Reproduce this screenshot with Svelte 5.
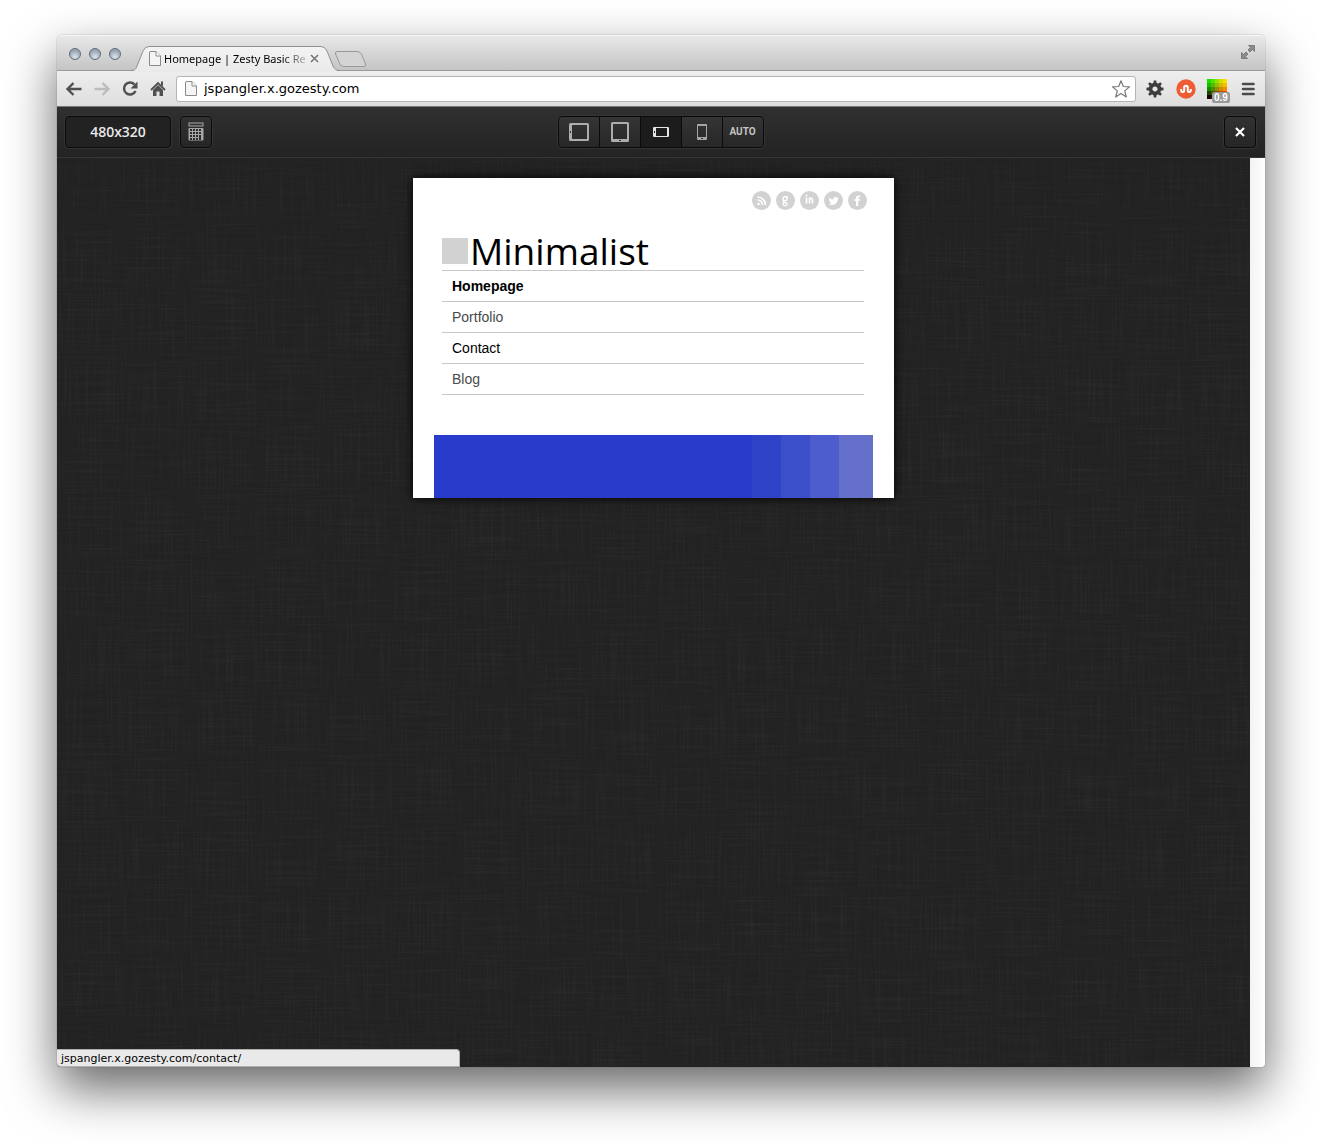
<script>
  let url = $state('jspangler.x.gozesty.com');
  let device = $state('phone-landscape');

  const pages = [
    { label: 'Homepage', href: '/', kind: 'current' },
    { label: 'Portfolio', href: '/portfolio/', kind: '' },
    { label: 'Contact', href: '/contact/', kind: 'hovered' },
    { label: 'Blog', href: '/blog/', kind: '' }
  ];

  const devices = [
    { id: 'tablet-landscape', label: 'Tablet landscape' },
    { id: 'tablet-portrait', label: 'Tablet portrait' },
    { id: 'phone-landscape', label: 'Phone landscape' },
    { id: 'phone-portrait', label: 'Phone portrait' },
    { id: 'auto', label: 'Auto' }
  ];

  const socials = ['RSS', 'Google', 'LinkedIn', 'Twitter', 'Facebook'];

  const swatches = [];
  for (let r = 0; r < 5; r++) {
    for (let c = 0; c < 5; c++) {
      const red = [20, 80, 150, 205, 245][c] * [1, 1, 1, 0.95, 0.85][r];
      const green = [225, 190, 140, 75, 5][r];
      swatches.push({ x: c * 4, y: r * 4, fill: `rgb(${Math.round(red)},${green},0)` });
    }
  }
</script>

{#snippet pageIcon()}
  <svg class="page-icon" width="12" height="15" viewBox="0 0 12 15" aria-hidden="true">
    <path d="M1 .5h6L11.500 5v9.500H.5V1z" fill="#f4f4f4" stroke="#8a8a8a" />
    <path d="M7 .5V5h4.500" fill="#fff" stroke="#8a8a8a" />
  </svg>
{/snippet}

<div class="desktop">
  <div class="window">
    <header class="titlebar">
      <div class="lights">
        <button aria-label="Close window"></button>
        <button aria-label="Minimize window"></button>
        <button aria-label="Zoom window"></button>
      </div>
      <div class="tab">
        <svg class="tab-shape" width="210" height="26" viewBox="0 0 210 26" aria-hidden="true">
          <defs>
            <linearGradient id="tabfill" x1="0" y1="0" x2="0" y2="1">
              <stop offset="0" stop-color="#f3f3f3" />
              <stop offset="1" stop-color="#eaeaea" />
            </linearGradient>
          </defs>
          <path d="M0 25.500C4 25 5 23 6 20L12 5Q14 .5 18 .5H190Q194 .5 196 5L202 20C204 24 206 25 209 25.500V26H0z" fill="url(#tabfill)" />
          <path d="M0 24.500C4 24 5 23 6 20L12 5Q14 .5 18 .5H190Q194 .5 196 5L202 20C204 24 206 24.500 210 24.500" fill="none" stroke="#8f8f8f" />
        </svg>
        {@render pageIcon()}
        <span class="tab-title">Homepage | Zesty Basic Re</span>
        <button class="tab-close" aria-label="Close tab">
          <svg width="9" height="9" viewBox="0 0 9 9"><path d="M1 1l7 7M8 1L1 8" stroke="#777" stroke-width="1.600" /></svg>
        </button>
      </div>
      <button class="new-tab" aria-label="New tab">
        <svg width="34" height="18" viewBox="0 0 34 18">
          <path d="M3 1.500H23Q26 1.500 27.500 4L31.500 14Q32 16.500 30 16.500H10Q7 16.500 6 14L1.500 4Q1 1.500 3 1.500z" fill="#d4d4d4" stroke="#999" />
        </svg>
      </button>
      <button class="fullscreen" aria-label="Full screen">
        <svg width="16" height="16" viewBox="0 0 16 16" fill="#8b8b8b" stroke="#666" stroke-width=".7">
          <path d="M8.500 1.500h6v6l-2-2-2.500 2.500-2-2L10.500 3.500z" />
          <path d="M7.500 14.500h-6v-6l2 2L6 8l2 2-2.500 2.500z" />
        </svg>
      </button>
    </header>

    <div class="navbar">
      <button class="tool" aria-label="Back">
        <svg width="18" height="18" viewBox="0 0 18 18" fill="none" stroke="#505050" stroke-width="2.400"><path d="M2.500 9H16.500M8.500 3L2.500 9l6 6" /></svg>
      </button>
      <button class="tool" aria-label="Forward">
        <svg width="18" height="18" viewBox="0 0 18 18" fill="none" stroke="#bcbcbc" stroke-width="2.400"><path d="M15.500 9H1.500M9.500 3l6 6-6 6" /></svg>
      </button>
      <button class="tool" aria-label="Reload">
        <svg width="18" height="18" viewBox="0 0 18 18"><path d="M13.500 4.500A6 6 0 1 0 14.500 11" fill="none" stroke="#505050" stroke-width="2.500" /><path d="M16.500 1.500V8.500H9.500z" fill="#505050" /></svg>
      </button>
      <button class="tool" aria-label="Home">
        <svg width="18" height="18" viewBox="0 0 18 18"><path d="M9 5l5 5v6h-3.500v-4.500h-3V16H4v-6z" fill="#505050" /><path d="M2 10L9 3l7 7" fill="none" stroke="#505050" stroke-width="1.800" /><path d="M12 1.500h2v5l-2-2z" fill="#505050" /></svg>
      </button>
      <div class="omnibox">
        {@render pageIcon()}
        <input type="text" aria-label="Address" spellcheck="false" bind:value={url} />
        <button class="star" aria-label="Bookmark">
          <svg width="20" height="20" viewBox="0 0 20 20"><path d="M10 1.800l2.300 5.700 6.200.4-4.800 4 1.600 6.100L10 14.600 4.700 18l1.600-6.100-4.800-4 6.200-.4z" fill="#fff" stroke="#777" stroke-width="1.200" stroke-linejoin="round" /></svg>
        </button>
      </div>
      <button class="extension" aria-label="Settings">
        <svg width="18" height="18" viewBox="-9 -9 18 18">
          <circle r="4.400" fill="none" stroke="#3d3d3d" stroke-width="3.600" />
          <g fill="#3d3d3d">
            {#each [0, 45, 90, 135, 180, 225, 270, 315] as a}
              <path d="M-1.700-5.500L-1.200-8.500H1.200L1.700-5.500z" transform="rotate({a})" />
            {/each}
          </g>
        </svg>
      </button>
      <button class="extension" aria-label="StumbleUpon">
        <svg width="20" height="20" viewBox="0 0 20 20">
          <circle cx="10" cy="10" r="9.700" fill="#ee5c34" />
          <path d="M5.200 10v1.500a1.500 1.500 0 0 0 3 0V8.500a1.800 1.800 0 0 1 3.600 0v3a1.500 1.500 0 0 0 3 0V10" fill="none" stroke="#fff" stroke-width="2" />
        </svg>
      </button>
      <button class="extension" aria-label="Page score">
        <svg width="20" height="20" viewBox="0 0 20 20">
          {#each swatches as s}<rect x={s.x} y={s.y} width="4" height="4" fill={s.fill} />{/each}
        </svg>
        <span class="badge">0.9</span>
      </button>
      <button class="extension" aria-label="Menu">
        <svg width="14" height="14" viewBox="0 0 14 14" stroke="#4b4b4b" stroke-width="2.600" stroke-linecap="round"><path d="M2 2h10.500M2 7h10.500M2 12h10.500" /></svg>
      </button>
    </div>

    <div class="previewbar">
      <div class="left">
        <button class="dark size">480x320</button>
        <button class="dark square" aria-label="Calculator">
          <svg width="16" height="19" viewBox="0 0 16 19">
            <rect x="1" y="1" width="14" height="3" fill="#333" stroke="#a8a8a8" />
            <rect x=".5" y="6" width="15" height="12.500" rx="1" fill="#a8a8a8" />
            <g fill="#2c2c2c">
              {#each [7, 10, 13, 16] as y}
                {#each [2, 5, 8, 11] as x}<rect {x} {y} width="2" height="2" />{/each}
              {/each}
              <rect x="11" y="13" width="2" height="5" />
            </g>
          </svg>
        </button>
      </div>
      <div class="devices" role="group" aria-label="Device">
        {#each devices as d}
          <button class:active={device === d.id} aria-pressed={device === d.id} aria-label={d.label} onclick={() => (device = d.id)}>
            {#if d.id === 'tablet-landscape'}
              <svg width="20" height="18" viewBox="0 0 20 18"><path fill="#adadad" fill-rule="evenodd" d="M1.500 0h17Q20 0 20 1.500v15q0 1.500-1.500 1.500h-17Q0 18 0 16.500v-15Q0 0 1.500 0zM3 2v14h15V2z" /><path d="M1 8h1v2H1z" fill="#333" /></svg>
            {:else if d.id === 'tablet-portrait'}
              <svg width="18" height="20" viewBox="0 0 18 20"><path fill="#adadad" fill-rule="evenodd" d="M1.500 0h15Q18 0 18 1.500v17q0 1.500-1.500 1.500h-15Q0 20 0 18.500v-17Q0 0 1.500 0zM2 2v15h14V2z" /><path d="M8 18h2v1H8z" fill="#333" /></svg>
            {:else if d.id === 'phone-landscape'}
              <svg width="16" height="10" viewBox="0 0 16 10"><path fill="#e4e4e4" fill-rule="evenodd" d="M1 0h14q1 0 1 1v8q0 1-1 1H1q-1 0-1-1V1q0-1 1-1zM3 1v8h11V1z" /><path d="M1 4h1v2H1z" fill="#222" /></svg>
            {:else if d.id === 'phone-portrait'}
              <svg width="10" height="16" viewBox="0 0 10 16"><path fill="#a5a5a5" fill-rule="evenodd" d="M1 0h8q1 0 1 1v14q0 1-1 1H1q-1 0-1-1V1q0-1 1-1zM1 2v11h8V2z" /><path d="M4 14h2v1H4z" fill="#333" /></svg>
            {:else}
              AUTO
            {/if}
          </button>
        {/each}
      </div>
      <div class="right">
        <button class="dark square" aria-label="Close preview">
          <svg width="10" height="10" viewBox="0 0 10 10"><path d="M1 1l8 8M9 1L1 9" stroke="#fff" stroke-width="2.200" /></svg>
        </button>
      </div>
    </div>

    <main class="stage">
      <div class="canvas">
        <svg class="linen" width="100%" height="100%" aria-hidden="true">
          <filter id="warp" x="0" y="0" width="100%" height="100%">
            <feTurbulence type="fractalNoise" baseFrequency="0.5 0.015" numOctaves="2" seed="3" />
            <feColorMatrix values="0 0 0 0 1  0 0 0 0 1  0 0 0 0 1  .5 0 0 0 -.22" />
          </filter>
          <filter id="weft" x="0" y="0" width="100%" height="100%">
            <feTurbulence type="fractalNoise" baseFrequency="0.015 0.5" numOctaves="2" seed="8" />
            <feColorMatrix values="0 0 0 0 1  0 0 0 0 1  0 0 0 0 1  .5 0 0 0 -.22" />
          </filter>
          <rect width="100%" height="100%" filter="url(#warp)" opacity=".12" />
          <rect width="100%" height="100%" filter="url(#weft)" opacity=".12" />
        </svg>
        <article class="site">
          <div class="socials">
            {#each socials as s, i}
              <a href="#{s.toLowerCase()}" aria-label={s}>
                <svg width="19" height="19" viewBox="0 0 19 19">
                  <circle cx="9.500" cy="9.500" r="9.500" fill="#d2d2d2" />
                  {#if i === 0}
                    <g fill="none" stroke="#fff" stroke-width="1.700"><path d="M5.500 9a5 5 0 0 1 5 5M5.500 6a8 8 0 0 1 8 8" /></g><circle cx="6.500" cy="13" r="1.300" fill="#fff" />
                  {:else if i === 1}
                    <g fill="none" stroke="#fff" stroke-width="1.400"><circle cx="9" cy="7.800" r="2" /><path d="M10.500 6.200l1.800-.6M8 10c-1.500 1 0 1.500 1.500 1.600 2.500.1 2 3-.3 3-2.700 0-2.600-2.300-.7-2.800" /></g>
                  {:else if i === 2}
                    <path d="M6.500 6.500V12.500M9.500 6.500V12.500M9.500 8.500c.5-1.500 3-1.500 3 .5v3.500" fill="none" stroke="#fff" stroke-width="1.700" /><circle cx="6.500" cy="4.500" r="1" fill="#fff" />
                  {:else if i === 3}
                    <path d="M5 6.500c1.200 1.300 2.500 2 4.300 2C9 6.500 11.500 5.200 13 6.700l1.500-.4-.8 1.300.9.200-1 1C13.400 12 11 14 8.500 14c-1.600 0-3-.4-3.900-1 1.200 0 2.200-.3 3-.9-1-.1-1.700-.7-2-1.500h1C5.500 10.100 5 9.300 4.900 8.400l.8.200C4.900 8 4.700 7.200 5 6.500z" fill="#fff" />
                  {:else}
                    <path d="M8 15V10H6.500V8H8V6.800C8 4.800 9.500 4.200 12 4.500v1.800c-1.200-.1-1.800 0-1.800.8V8H12l-.3 2h-1.500v5z" fill="#fff" />
                  {/if}
                </svg>
              </a>
            {/each}
          </div>
          <h1><span class="mark"></span>Minimalist</h1>
          <nav>
            {#each pages as p}
              <a class={p.kind} href={p.href}>{p.label}</a>
            {/each}
          </nav>
          <div class="banner"><i></i><i></i><i></i><i></i></div>
        </article>
      </div>
      <div class="gutter"></div>
    </main>
    <div class="status">jspangler.x.gozesty.com/contact/</div>
  </div>
</div>

<style>
  :global(body) { background: #fff; }
  .desktop {
    box-sizing: border-box;
    min-height: 100vh;
    padding: 35px 57px 79px;
    display: flex;
    overflow: hidden;
    font-family: "Noto Sans", sans-serif;
  }
  .desktop *, .desktop *::before { box-sizing: border-box; }
  button { border: 0; padding: 0; margin: 0; background: none; font: inherit; color: inherit; }
  svg { display: block; flex: none; }
  .window {
    position: relative;
    flex: 1;
    display: flex;
    flex-direction: column;
    border-radius: 5px 5px 4px 4px;
    box-shadow: 0 0 1px #444, 0 22px 50px rgba(0, 0, 0, .6);
  }
  .titlebar {
    display: flex;
    align-items: flex-end;
    height: 36px;
    border-radius: 5px 5px 0 0;
    border-bottom: 1px solid #9a9a9a;
    background: linear-gradient(#e9e9e9, #c4c4c4);
    box-shadow: inset 0 1px #f6f6f6;
  }
  .lights { display: flex; gap: 8px; align-self: center; padding: 2px 0 0 12px; width: 74px; }
  .lights button {
    width: 12px; height: 12px; border-radius: 50%;
    border: 1px solid #626b75;
    background: radial-gradient(circle at 50% 80%, #dbe5ee, #96a4b2 70%);
  }
  .tab { position: relative; display: flex; align-items: center; width: 208px; height: 25px; margin-bottom: -1px; padding-left: 18px; }
  .tab > :global(*) { position: relative; }
  .tab > .tab-shape { position: absolute; left: 0; top: 0; }
  .tab-title {
    width: 143px; margin-left: 3px; overflow: hidden; white-space: nowrap; font-size: 11px;
    mask-image: linear-gradient(90deg, #000 118px, transparent 148px);
  }
  .tab-close { margin-left: 3px; }
  .new-tab { margin: 0 0 2px -5px; }
  .fullscreen { margin: 0 9px 10px auto; }
  .navbar {
    display: flex; align-items: center; height: 36px; padding: 0 2px 0 3px;
    background: linear-gradient(#eee, #dedede);
    border-bottom: 1px solid #747877;
  }
  .tool { display: flex; justify-content: center; flex: none; width: 28px; }
  .omnibox {
    flex: 1; min-width: 0; height: 26px; margin: 0 3px 0 4px; padding: 0 4px 0 8px; display: flex; align-items: center;
    background: #fff; border: 1px solid #b4b4b4; border-radius: 3px;
  }
  .omnibox input { flex: 1; min-width: 0; border: 0; outline: 0; padding: 0; margin-left: 7px; background: none; font: 13px "DejaVu Sans", sans-serif; color: #000; }
  .extension { position: relative; display: flex; justify-content: center; flex: none; width: 31px; }
  .badge {
    position: absolute; left: 11px; top: 13px; height: 11px; padding: 0 2px; border-radius: 2px;
    background: #999; color: #fff; font: bold 10px/11px "Liberation Sans", sans-serif;
  }
  .previewbar {
    display: grid; grid-template-columns: 1fr auto 1fr; align-items: center; height: 51px; padding: 0 9px 1px 8px;
    background: linear-gradient(#303030, #232323);
    border-bottom: 1px solid #363636;
  }
  .left { display: flex; gap: 9px; }
  .right { display: flex; justify-content: flex-end; }
  .dark, .devices {
    height: 32px; border: 1px solid #0a0a0a; border-radius: 4px;
    box-shadow: 0 0 1px 1px #363636;
  }
  .dark { display: flex; align-items: center; justify-content: center; background: linear-gradient(#323232, #262626); }
  .square { width: 32px; }
  .size { width: 106px; background: #222; color: #e8e8e8; font: 600 14px "Open Sans", sans-serif; }
  .devices { display: flex; background: linear-gradient(#353535, #272727); overflow: hidden; }
  .devices button {
    display: flex; align-items: center; justify-content: center; width: 41px;
    border-right: 1px solid #0a0a0a; color: #c4c4c4; font: bold 10px Roboto, sans-serif;
  }
  .devices button:last-child { width: 40px; border-right: 0; }
  .devices .active { background: #1c1c1c; }
  .stage { flex: 1; display: flex; }
  .canvas { position: relative; flex: 1; padding: 20px 0; background: #222; border-radius: 0 0 0 4px; overflow: hidden; }
  .linen { position: absolute; inset: 0; }
  .gutter { width: 15px; background: linear-gradient(90deg, #f3f3f3, #fff); border-radius: 0 0 4px; }
  .site {
    position: relative; width: 481px; max-width: 100%; margin: 0 auto; padding-top: 13px; background: #fff;
    box-shadow: 0 0 10px #000;
  }
  .socials { display: flex; justify-content: flex-end; gap: 5px; padding-right: 27px; }
  h1 {
    display: flex; align-items: center; gap: 2px; height: 38px; margin: 22px 29px 0;
    font: 400 37px/38px "Open Sans", sans-serif; color: #000;
  }
  .mark { width: 26px; height: 26px; background: #d2d2d2; }
  nav { margin: 0 30px 0 29px; border-top: 1px solid #c8c8c8; }
  nav a {
    display: block; height: 31px; padding-left: 10px; border-bottom: 1px solid #c8c8c8;
    font: 14px/30px "Liberation Sans", sans-serif; color: #4a4a4a; text-decoration: none;
  }
  nav .current { font-weight: bold; color: #000; }
  nav .hovered { color: #000; }
  .banner { display: flex; justify-content: flex-end; height: 63px; margin: 40px 21px 0; background: #293bca; }
  .banner i { width: 29px; background: #2f43c8; }
  .banner i:nth-child(2) { background: #3c4fcb; }
  .banner i:nth-child(3) { background: #4d5dce; }
  .banner i:nth-child(4) { width: 34px; background: #6570cb; }
  .status {
    position: absolute; left: 0; bottom: 0; width: 403px; max-width: 100%; height: 18px; padding-left: 4px;
    border: 1px solid #b0b0b0; border-left: 0; border-radius: 0 4px 0 4px; background: #e9e9e9;
    font: 11px/17px "DejaVu Sans", sans-serif; color: #000;
  }
</style>
